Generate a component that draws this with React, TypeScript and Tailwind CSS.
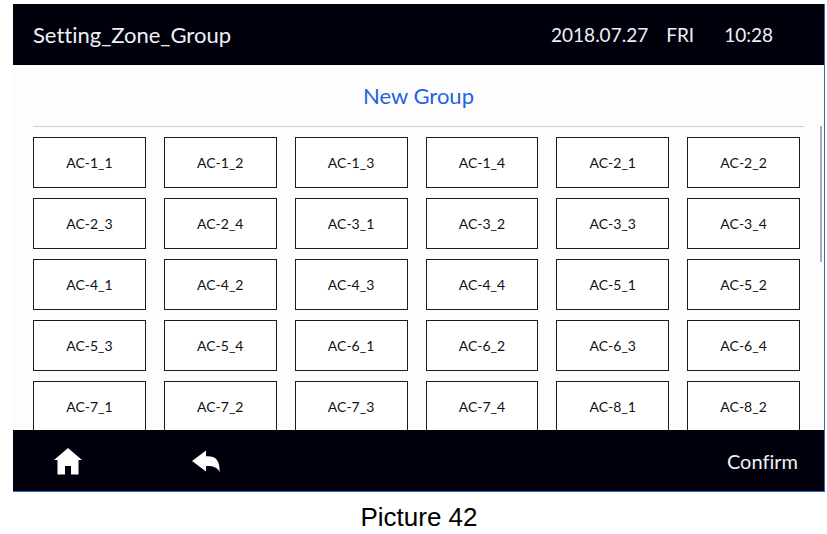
const zones = [
  'AC-1_1', 'AC-1_2', 'AC-1_3', 'AC-1_4', 'AC-2_1', 'AC-2_2',
  'AC-2_3', 'AC-2_4', 'AC-3_1', 'AC-3_2', 'AC-3_3', 'AC-3_4',
  'AC-4_1', 'AC-4_2', 'AC-4_3', 'AC-4_4', 'AC-5_1', 'AC-5_2',
  'AC-5_3', 'AC-5_4', 'AC-6_1', 'AC-6_2', 'AC-6_3', 'AC-6_4',
  'AC-7_1', 'AC-7_2', 'AC-7_3', 'AC-7_4', 'AC-8_1', 'AC-8_2',
];

function HomeIcon() {
  return (
    <svg viewBox="0 0 28 28" className="w-7 h-7" fill="currentColor" aria-hidden="true">
      <path d="M14 1 L28 13 H24.5 V27.5 H17 V19 H11 V27.5 H3.5 V13 H0 Z" />
    </svg>
  );
}

function BackIcon() {
  return (
    <svg viewBox="0 0 28 28" className="w-7 h-7" fill="currentColor" aria-hidden="true">
      <path d="M0 14 L14 3.5 V9.3 C23 8.8 28 12 27.6 25.5 C26 20.5 21 18.8 14 19 V24.5 Z" />
    </svg>
  );
}

export default function App() {
  return (
    <main className="bg-white pl-[13px] pr-[2px] pt-1 text-black">
      <div className="border-r border-b border-[#2a6fa8] bg-[#fdfdfe] font-['Lato',sans-serif] [font-variant-ligatures:none]">
        <header className="flex items-center justify-between bg-[#00000c] h-[61px] pl-5 pr-[51px] leading-7 text-[#f0f0f4]">
          <h1 className="text-[22px]">Setting_Zone_Group</h1>
          <div className="flex text-[19px]">
            <span>2018.07.27</span>
            <span className="ml-[18px]">FRI</span>
            <span className="ml-[30px]">10:28</span>
          </div>
        </header>

        <h2 className="pt-[17px] pb-4 text-center text-[22px] leading-7 text-[#2463e0]">New Group</h2>

        <div className="flex justify-between pl-5 pr-[2px]">
          <div className="flex-1 mr-4">
            <hr className="border-[#cfcfd3]" />
            {/* zone list, the last row is cut by the footer */}
            <div className="h-[303px] overflow-hidden pt-[10px] pr-1">
              <div className="grid grid-cols-6 gap-x-[18px] gap-y-[10px]">
                {zones.map((zone) => (
                  <button key={zone} type="button" className="h-[51px] border border-[#1c1c20] bg-white text-sm text-[#101014]">
                    {zone}
                  </button>
                ))}
              </div>
            </div>
          </div>
          <div className="w-[2px] h-[136px] bg-[#a9adb3]"></div>
        </div>

        <footer className="flex items-center bg-[#00000c] h-[61px] pl-[41px] pr-[26px] text-white">
          <button type="button" aria-label="Home"><HomeIcon /></button>
          <button type="button" aria-label="Back" className="ml-[110px]"><BackIcon /></button>
          <button type="button" className="ml-auto text-[20px] leading-7 text-[#f0f0f4]">Confirm</button>
        </footer>
      </div>
      <p className="pt-[7px] text-center font-['Liberation_Sans',Arial,sans-serif] text-[26px] leading-9">Picture 42</p>
    </main>
  );
}
